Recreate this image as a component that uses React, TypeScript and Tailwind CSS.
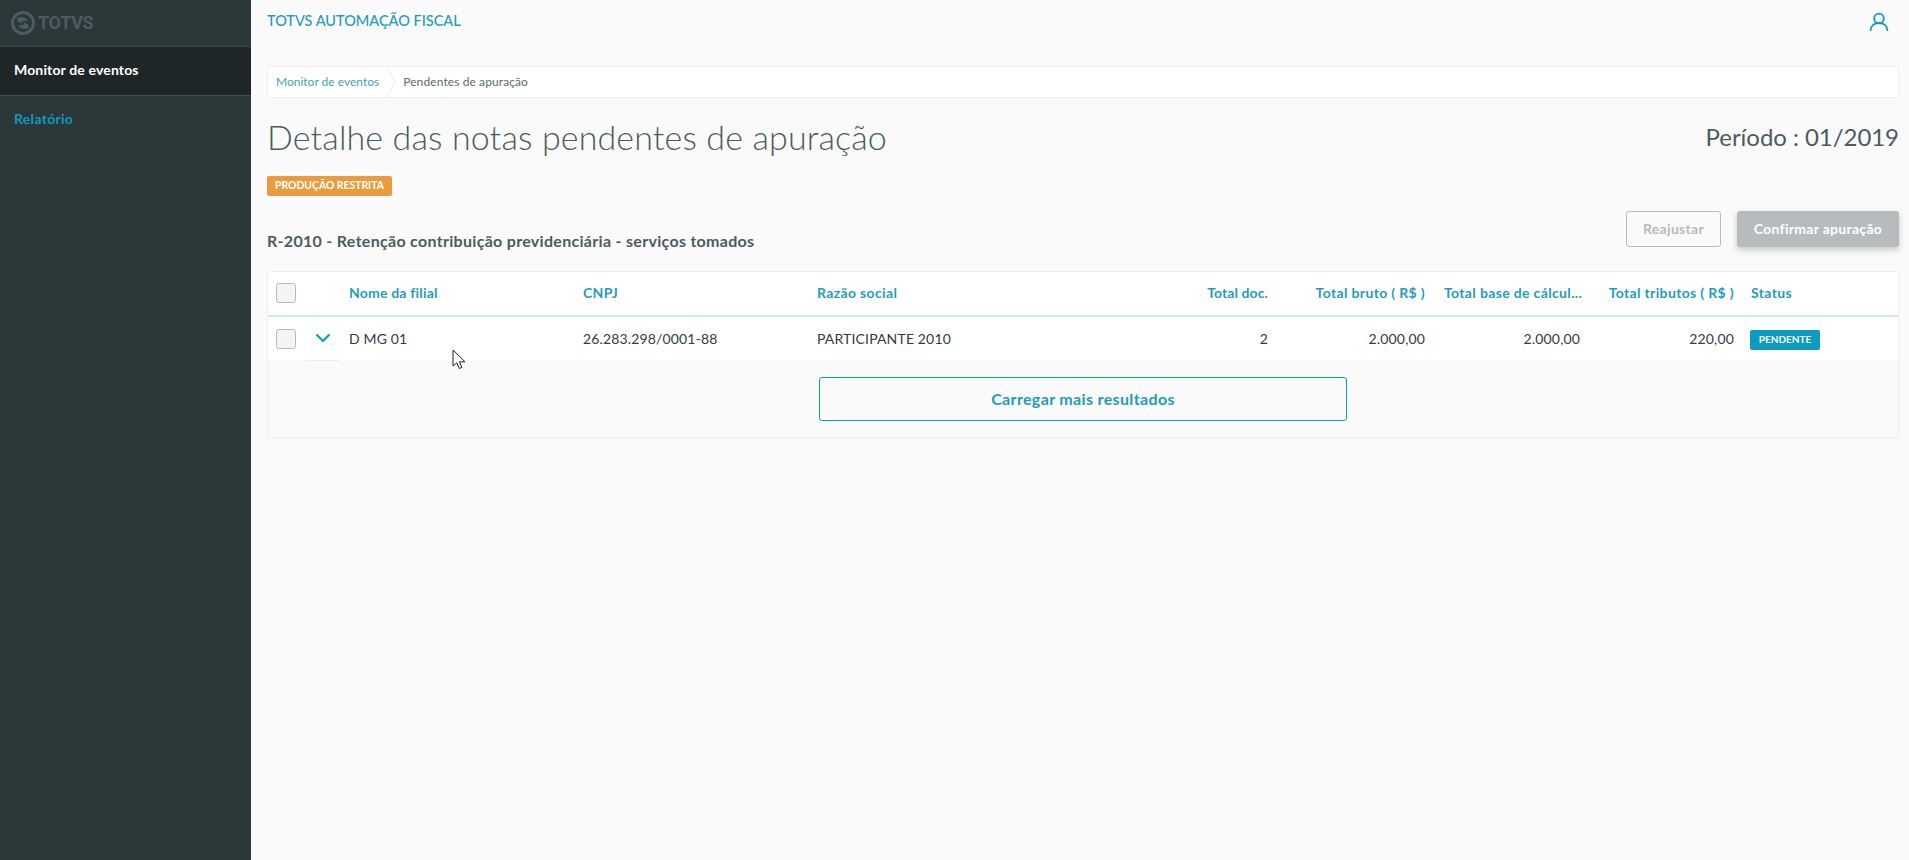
const font = { fontFamily: '"Lato", "Liberation Sans", sans-serif' };

function Logo() {
  return (
    <svg width="26" height="26" viewBox="0 0 26 26" className="shrink-0">
      <circle cx="13" cy="13" r="10.5" fill="none" stroke="#4a5c60" strokeWidth="3" />
      <path d="M7.5 7.5 L14 7 L18.5 10.5 L12 11.5 L12 13.5 L7.5 11.5 Z" fill="#4a5c60" />
      <path d="M18.5 18.5 L12 19 L7.5 15.5 L14 14.5 L14 12.5 L18.5 14.5 Z" fill="#4a5c60" />
    </svg>
  );
}

function Checkbox() {
  return <div className="h-5 w-5 rounded-[3px] border border-[#b6bbbd] bg-[#f3f4f4]" />;
}

function Cursor() {
  return (
    <svg width="14" height="21" viewBox="0 0 14 21" className="absolute left-[452px] top-[349px]">
      <path d="M1 1 L1 17 L4.8 13.8 L7.2 19.5 L9.8 18.3 L7.5 12.8 L13 12.8 Z" fill="#fff" stroke="#1c2426" strokeWidth="1" />
    </svg>
  );
}

const cols = "grid grid-cols-[37px_36px_234px_234px_310px_157px_157px_155px_154px_1fr] items-center";

export default function App() {
  return (
    <div style={font} className="relative flex h-screen w-full overflow-hidden bg-[#fafafa] text-[#4a5c60]">
      <aside className="flex w-[251px] shrink-0 flex-col bg-[#2c3739]">
        <div className="flex h-[47px] items-center gap-[2px] border-b border-[#3b4648] pl-[10px]">
          <Logo />
          <span className="font-['Roboto'] text-[18px] font-bold leading-none tracking-[-0.3px] text-[#4a5c60]">TOTVS</span>
        </div>
        <div className="flex h-[49px] items-center border-b border-[#434e50] bg-[#1f2628] pb-[2px] pl-[14px] text-sm font-bold tracking-[0.15px] text-white">
          Monitor de eventos
        </div>
        <div className="flex h-[48px] items-center pb-[2px] pl-[14px] text-sm font-bold tracking-[0.3px] text-[#0c9abe]">Relatório</div>
      </aside>

      <main className="flex min-w-0 flex-1 flex-col pl-[16px] pr-[10px]">
        <header className="flex h-[66px] items-start justify-between pr-[10px]">
          <span className="mt-[12px] text-[14.5px] font-medium leading-[18px] text-[#1f9cbd]">TOTVS AUTOMAÇÃO FISCAL</span>
          <svg width="20" height="20" viewBox="0 0 20 20" fill="none" stroke="#0c9abe" strokeWidth="1.8" className="mt-[12px]">
            <circle cx="10" cy="6.5" r="4.8" />
            <path d="M1.5 19 C1.5 14 5 11 10 11 C15 11 18.5 14 18.5 19" />
          </svg>
        </header>

        <nav className="flex h-[32px] items-center rounded-[3px] border border-[#eeeeee] bg-white text-xs">
          <span className="pl-[8px] text-[#3f9fbb]">Monitor de eventos</span>
          <svg width="9" height="30" viewBox="0 0 9 30" fill="none" stroke="#ececec" className="ml-[8px]">
            <path d="M0 0 L8 15 L0 30" />
          </svg>
          <span className="ml-[7px] tracking-[0.1px] text-[#5a6a6e]">Pendentes de apuração</span>
        </nav>

        <div className="mt-[19px] flex h-[40px] items-center justify-between">
          <h1 className="text-[34px] font-light leading-[40px] tracking-[0.13px] text-[#4a5c60]">Detalhe das notas pendentes de apuração</h1>
          <span className="text-[24px] leading-[32px] tracking-[-0.05px]">Período : 01/2019</span>
        </div>

        <div className="mt-[19px] flex">
          <span className="flex h-[20px] items-center rounded-[2px] bg-[#ea9b3e] px-[8px] text-[10.4px] font-bold text-white">
            PRODUÇÃO RESTRITA
          </span>
        </div>

        <div className="mt-[15px] flex h-[36px] items-center justify-between">
          <h2 className="mt-[23px] text-base font-bold leading-[20px] tracking-[0.3px]">R-2010 - Retenção contribuição previdenciária - serviços tomados</h2>
          <div className="flex gap-4">
            <button className="h-[36px] w-[95px] rounded-[3px] border border-[#b6bbbd] text-sm font-bold tracking-[0.3px] text-[#b6bbbd]">Reajustar</button>
            <button className="h-[36px] w-[162px] rounded-[3px] bg-[#b6bbbd] text-sm font-bold tracking-[0.3px] text-white shadow-[0_3px_6px_rgba(0,0,0,0.2)]">Confirmar apuração</button>
          </div>
        </div>

        <section className="mt-[24px] h-[167px] overflow-hidden rounded-[3px] border border-[#eeeeee] bg-[#fafafa]">
          <div className={`${cols} h-[45px] border-b-2 border-[#cfe9f1] bg-white pb-[1px] text-sm font-bold tracking-[0.35px] text-[#1f9cbd]`}>
            <div className="pl-[8px]"><Checkbox /></div>
            <div />
            <div className="px-[8px] tracking-[0.2px]">Nome da filial</div>
            <div className="px-[8px]">CNPJ</div>
            <div className="px-[8px]">Razão social</div>
            <div className="px-[8px] text-right tracking-[0.1px]">Total doc.</div>
            <div className="px-[8px] text-right">Total bruto ( R$ )</div>
            <div className="whitespace-nowrap pl-[11px]">Total base de cálcul...</div>
            <div className="px-[8px] text-right">Total tributos ( R$ )</div>
            <div className="px-[8px] pl-[9px]">Status</div>
          </div>
          <div className={`${cols} h-[44px] bg-white text-sm tracking-[0.15px] text-[#333b3d]`}>
            <div className="pl-[8px]"><Checkbox /></div>
            <div className="flex h-full items-center justify-center border-b border-[#eeeeee] pb-[2px]">
              <svg width="16" height="10" viewBox="0 0 16 10" fill="none" stroke="#0c9abe" strokeWidth="2.2">
                <path d="M1.5 1.5 L8 8 L14.5 1.5" />
              </svg>
            </div>
            <div className="px-[8px]">D MG 01</div>
            <div className="px-[8px]">26.283.298/0001-88</div>
            <div className="px-[8px]">PARTICIPANTE 2010</div>
            <div className="px-[8px] text-right">2</div>
            <div className="px-[8px] text-right">2.000,00</div>
            <div className="px-[8px] text-right">2.000,00</div>
            <div className="px-[8px] text-right">220,00</div>
            <div className="px-[8px]">
              <span className="inline-flex h-[20px] w-[70px] items-center justify-center rounded-[2px] bg-[#0c9abe] text-[10px] font-bold tracking-normal text-white">PENDENTE</span>
            </div>
          </div>
          <div className="flex justify-center pt-[16px]">
            <button className="h-[44px] w-[528px] rounded-[3px] border border-[#0c9abe] text-base font-bold tracking-[0.35px] text-[#1f9cbd]">Carregar mais resultados</button>
          </div>
        </section>
      </main>
      <Cursor />
    </div>
  );
}
